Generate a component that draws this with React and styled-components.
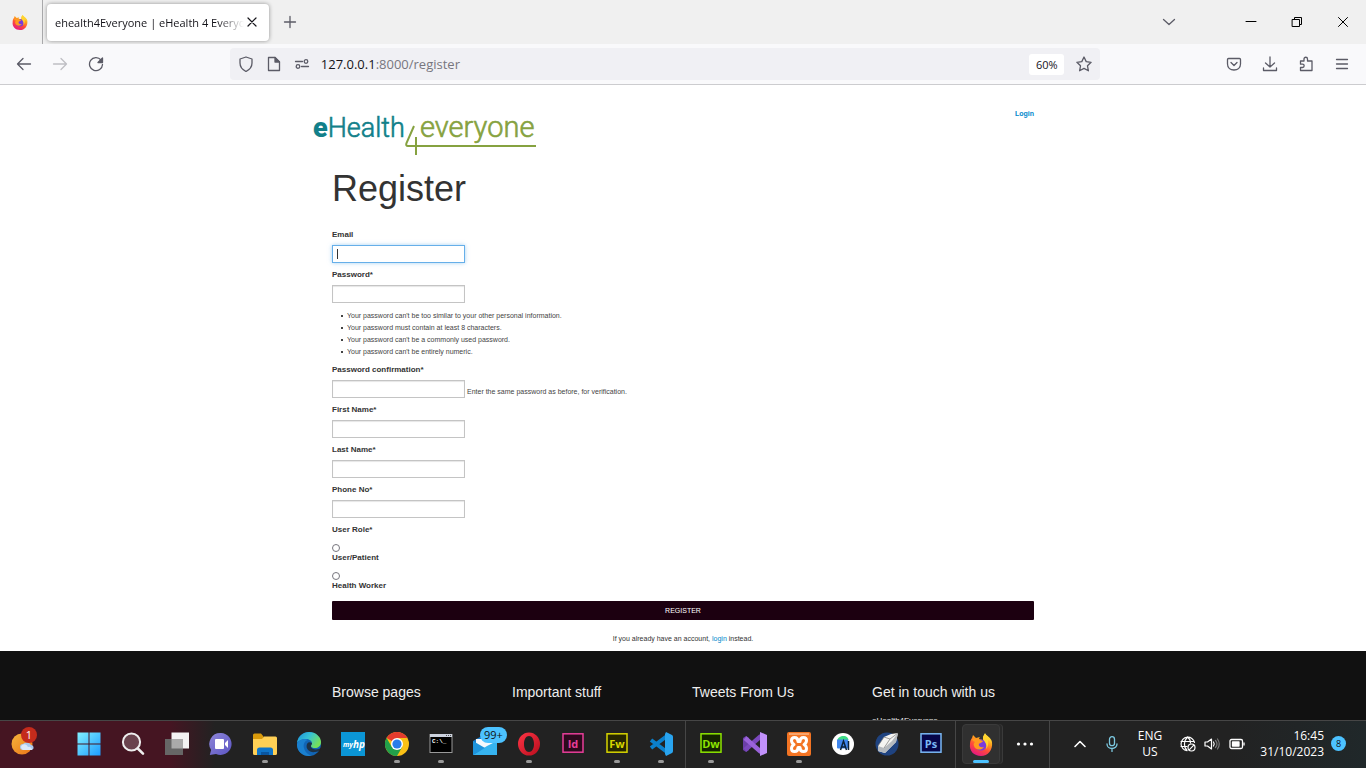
import React from 'react';
import styled, { createGlobalStyle } from 'styled-components';

const GlobalStyle = createGlobalStyle`
  *, *::before, *::after { box-sizing: border-box; }
  body { margin: 0; background: #fff; }
  button, input { font: inherit; }
  button { border: 0; padding: 0; background: none; color: inherit; }
  svg { display: block; flex: none; }
`;

const uiFont = `"Open Sans", "Noto Sans", sans-serif`;
const pageFont = `"Liberation Sans", Arial, sans-serif`;

const Desktop = styled.div`
  display: flex;
  flex-direction: column;
  height: 100vh;
  overflow: hidden;
  font-family: ${uiFont};
`;

/* Browser chrome */
const TabStrip = styled.div`
  display: flex;
  align-items: center;
  flex: none;
  height: 44px;
  background: #f0f0f0;
`;
const PinnedTab = styled.div`
  display: flex;
  align-items: center;
  justify-content: center;
  width: 43px;
  height: 44px;
  padding-right: 2px;
  border-right: 1px solid #a9a9ab;
`;
const Tab = styled.div`
  display: flex;
  align-items: center;
  width: 222px;
  height: 37px;
  margin-left: 4px;
  padding: 0 9px 0 8px;
  border-radius: 4px;
  background: #fff;
  box-shadow: 0 0 4px rgba(0, 0, 0, 0.4);
`;
const TabTitle = styled.span`
  flex: 1;
  overflow: hidden;
  white-space: nowrap;
  font-size: 11px;
  color: #15141a;
  mask-image: linear-gradient(to right, #000 86%, transparent);
`;
const IconButton = styled.button`
  display: flex;
  align-items: center;
  justify-content: center;
  width: ${(p) => p.$w || 36}px;
  height: 32px;
  color: ${(p) => p.$color || '#5b5b66'};
`;
const WindowControls = styled.div`
  display: flex;
  margin-left: auto;
`;
const Toolbar = styled.div`
  display: flex;
  align-items: center;
  flex: none;
  height: 41px;
  padding: 0 6px;
  border-bottom: 1px solid #cccccf;
  background: #f9f9fb;
`;
const Spacer = styled.div`
  flex: 2;
`;
const UrlBar = styled.div`
  display: flex;
  align-items: center;
  flex: 15;
  height: 32px;
  padding-left: 2px;
  border-radius: 4px;
  background: #f0f0f4;
`;
const Address = styled.span`
  flex: 1;
  padding-left: 5px;
  font-size: 13px;
  color: #77767e;
  b { font-weight: 400; color: #15141a; }
`;
const Zoom = styled.button`
  height: 21px;
  width: 35px;
  margin-right: 4px;
  border-radius: 3px;
  background: #fff;
  font-size: 11px;
  color: #15141a;
`;

/* Web page */
const Page = styled.div`
  flex: 1;
  min-height: 0;
  overflow: hidden;
  background: #fff;
  font-family: ${pageFont};
  font-size: 8px;
  line-height: 12px;
  color: #333;
`;
const Container = styled.div`
  max-width: 738px;
  margin: 0 auto;
  padding: 0 18px;
`;
const Header = styled.header`
  display: flex;
  justify-content: space-between;
  align-items: flex-start;
  max-width: 738px;
  margin: 0 auto;
  padding: 22px 18px 0 0;
`;
const LogoLink = styled.a`
  display: block;
  padding-top: 4px;
`;
const Link = styled.a`
  color: #0088cc;
  text-decoration: none;
`;
const LoginLink = styled(Link)`
  font-size: 7px;
  line-height: 14px;
  font-weight: 700;
`;
const Title = styled.h1`
  margin: 12px 0 20px;
  font-size: 36px;
  line-height: 40px;
  font-weight: 400;
`;
const Field = styled.div`
  margin-bottom: 6px;
`;
const Label = styled.label`
  display: block;
  font-weight: 700;
`;
const InputRow = styled.div`
  display: flex;
  align-items: flex-end;
  gap: 2px;
  margin-top: 4px;
`;
const Input = styled.input`
  width: 133px;
  height: 18px;
  padding: 2px 4px;
  border: 1px solid ${(p) => (p.$active ? '#66afe9' : '#c4c4c4')};
  border-radius: 0;
  outline: none;
  background: ${(p) =>
    p.$active ? 'linear-gradient(#333, #333) 4px center / 1px 10px no-repeat #fff' : '#fff'};
  box-shadow: ${(p) =>
    p.$active ? '0 0 4px rgba(102, 175, 233, 0.6)' : 'inset 0 1px 1px rgba(0, 0, 0, 0.1)'};
`;
const Hint = styled.span`
  font-size: 7px;
  color: #444;
`;
const Rules = styled.ul`
  margin: 7px 0 6px;
  padding-left: 9px;
  list-style: none;
  font-size: 7px;
  color: #444;
`;
const Rule = styled.li`
  display: flex;
  align-items: center;
  gap: 4px;
  &::before {
    content: '';
    width: 2px;
    height: 2px;
    background: #444;
  }
`;
const RoleSet = styled.fieldset`
  margin: 0;
  padding: 0;
  border: 0;
  legend { padding: 0; font-weight: 700; }
`;
const Role = styled.div`
  margin-top: 8px;
`;
const Radio = styled.input`
  display: block;
  appearance: none;
  width: 8px;
  height: 8px;
  margin: 0;
  border: 1px solid #77767e;
  border-radius: 50%;
  background: #fff;
`;
const Submit = styled.button`
  display: block;
  width: 100%;
  height: 19px;
  margin-top: 9px;
  border-radius: 1px;
  background: #1c0010;
  font-size: 7px;
  color: #fff;
`;
const Notice = styled.p`
  margin: 13px 0 6px;
  text-align: center;
  font-size: 7px;
`;
const Footer = styled.footer`
  min-height: 100%;
  padding-top: 32px;
  background: #111;
  color: #eee;
`;
const FooterColumns = styled.div`
  display: grid;
  grid-template-columns: repeat(4, 1fr);
  gap: 18px;
`;
const FooterTitle = styled.h2`
  margin: 0 0 14px;
  font-size: 14px;
  line-height: 18px;
  font-weight: 400;
  white-space: nowrap;
`;
const Text = styled.p`
  margin: 0;
`;

/* Taskbar */
const Taskbar = styled.div`
  display: flex;
  align-items: stretch;
  flex: none;
  height: 48px;
  padding-bottom: 2px;
  border-top: 1px solid #464646;
  background: linear-gradient(to right, #451522 170px, #222 215px, #222 90%, #20282a);
  color: #fff;
`;
const TaskButton = styled.button`
  position: relative;
  display: flex;
  align-items: center;
  justify-content: center;
  width: 44px;
`;
const WeatherButton = styled(TaskButton)`
  margin-right: 23px;
`;
const ActiveTile = styled.span`
  display: flex;
  align-items: center;
  justify-content: center;
  width: 38px;
  height: 40px;
  border: 1px solid #3a3a3a;
  border-radius: 4px;
  background: #303030;
  box-shadow: 2px 0 0 #292929, 3px 0 0 #3a3a3a;
`;
const Indicator = styled.i`
  position: absolute;
  bottom: 3px;
  left: 50%;
  width: ${(p) => (p.$active ? 16 : 6)}px;
  height: 3px;
  border-radius: 2px;
  background: ${(p) => (p.$active ? '#4cc2ff' : '#999')};
  transform: translateX(-50%);
`;
const Badge = styled.span`
  position: absolute;
  top: 6px;
  left: ${(p) => (p.$alert ? 21 : 17)}px;
  min-width: 16px;
  height: 16px;
  padding: 0 4px;
  border-radius: 8px;
  background: ${(p) => (p.$alert ? '#c42b1c' : '#4cc2ff')};
  color: ${(p) => (p.$alert ? '#fff' : '#111')};
  font-size: 11px;
  line-height: 16px;
`;
const Divider = styled.div`
  width: 1px;
  margin: 0 3px -2px 2px;
  background: #464646;
`;
const Tray = styled.div`
  display: flex;
  align-items: center;
  margin-left: auto;
  padding-right: 20px;
  font-size: 12px;
  line-height: 16px;
`;
const TrayButton = styled.button`
  display: flex;
  align-items: center;
  justify-content: center;
  width: ${(p) => p.$w}px;
  height: 40px;
`;
const StackedText = styled.div`
  width: ${(p) => p.$w}px;
  text-align: ${(p) => p.$align || 'center'};
`;
const Count = styled.span`
  width: 15px;
  height: 15px;
  margin-left: 7px;
  border-radius: 50%;
  background: #4cc2ff;
  color: #111;
  font-size: 9px;
  line-height: 15px;
  text-align: center;
`;

const Line = ({ size = 16, w = 1.3, children }) => (
  <svg width={size} height={size} viewBox="0 0 16 16" fill="none" stroke="currentColor" strokeWidth={w} strokeLinecap="round" strokeLinejoin="round" aria-hidden="true">
    {children}
  </svg>
);
const Art = ({ size = 24, children }) => (
  <svg width={size} height={size} viewBox="0 0 24 24" aria-hidden="true">{children}</svg>
);

const Firefox = ({ size, id }) => (
  <Art size={size}>
    <defs>
      <linearGradient id={id} x1="0.8" y1="0" x2="0.3" y2="1">
        <stop offset="0" stopColor="#fff44f" />
        <stop offset="0.35" stopColor="#ffa41c" />
        <stop offset="0.65" stopColor="#ff4a3a" />
        <stop offset="1" stopColor="#e31587" />
      </linearGradient>
    </defs>
    <path fill={`url(#${id})`} d="M3 6 4 3l3 3 4-1c-1 1-1 2-1 2l4 1V5l2-4c1 3 6 4 7 9 1 8-4 14-11 14C5 24 0 19 1 12c0-3 1-5 2-6Z" />
    <circle cx="12" cy="13" r="5.6" fill="#7a3bdc" />
    <path fill="#ff9a1f" d="M3 7c3-1 6 0 8 1l3 1c-1 2-4 2-4 3-1 2 2 4 5 3-3 4-9 3-10-1-1-2 0-3 1-4-2-1-3-2-3-3Z" />
    <path fill="#ffd32f" d="M16 2c2 3 6 4 6 9-1-2-2-3-3-3 1 5-1 8-2 9 2-6-3-8-3-11 0-2 1-3 2-4Z" />
  </Art>
);

const AdobeTile = ({ text, color, bg }) => (
  <Art>
    <rect x="2" y="1.8" width="20" height="18.4" fill={bg} stroke={color} strokeWidth="1.5" />
    <text x="12" y="15.5" textAnchor="middle" fontFamily="Open Sans" fontWeight="700" fontSize="11" fill={color}>{text}</text>
  </Art>
);

const WeatherIcon = () => (
  <Art>
    <defs><linearGradient id="sun" x2="1" y2="1"><stop stopColor="#f5b53c" /><stop offset="1" stopColor="#ea7418" /></linearGradient></defs>
    <circle cx="12" cy="12" r="10.5" fill="url(#sun)" />
    <path fill="#a9c9ee" d="M13 18a3 3 0 0 1 0-6 5 5 0 0 1 8 1 2.6 2.6 0 0 1 1 5Z" />
    <path fill="#dce9f9" d="M13 18a3 3 0 0 1-1-5 4 4 0 0 1 6 2 3 3 0 0 1 4 3Z" />
  </Art>
);
const StartIcon = () => (
  <Art>
    <defs><linearGradient id="win" x2="1" y2="1"><stop stopColor="#82f0ff" /><stop offset="1" stopColor="#1c9bff" /></linearGradient></defs>
    <path fill="url(#win)" d="M.5.5h11v11H.5zM12.5.5h11v11h-11zM.5 12.5h11v11H.5zM12.5 12.5h11v11h-11z" />
  </Art>
);
const SearchIcon = () => (
  <Art>
    <circle cx="10.5" cy="10" r="8.6" fill="#fff" fillOpacity=".2" stroke="#eee" strokeWidth="2" />
    <path d="m16.8 16.5 5.2 5.2" stroke="#eee" strokeWidth="2.6" strokeLinecap="round" />
  </Art>
);
const TaskViewIcon = () => (
  <Art>
    <path fill="#f3f3f3" d="M6.500.5h17.500v16H6.500z" />
    <path fill="#666" d="M0 7h18v16H0z" />
    <path fill="#aaa" d="M6.500 7H18v9.500H6.500z" />
  </Art>
);
const ChatIcon = () => (
  <Art>
    <defs><linearGradient id="chat" x2="1" y2="1"><stop stopColor="#8e86d8" /><stop offset="1" stopColor="#5b55c4" /></linearGradient></defs>
    <path fill="url(#chat)" d="M12 1a11 11 0 1 1-5 21L.8 23l1.300-5A11 11 0 0 1 12 1Z" />
    <rect x="6" y="7" width="9" height="10" rx="1" fill="#fff" />
    <path fill="#fff" d="m16 11 3-3v8l-3-3Z" />
  </Art>
);
const FolderIcon = () => (
  <Art>
    <path fill="#d99a0b" d="M0 3a1.500 1.500 0 0 1 1.500-1.500H8l2.500 3V9H0Z" />
    <path fill="#ffd055" d="M0 7h9l2-2.500h11.500A1.500 1.500 0 0 1 24 6v15.500a1.500 1.500 0 0 1-1.500 1.500h-21A1.500 1.500 0 0 1 0 21.500Z" />
    <path fill="#0f75c9" d="M4 23v-5a2.500 2.500 0 0 1 2.500-2.500h11A2.500 2.500 0 0 1 20 18v5Z" />
    <path fill="#0a56a0" d="M8 20h8v3H8z" />
  </Art>
);
const EdgeIcon = () => (
  <Art>
    <defs>
      <linearGradient id="edge" x2="1" y2=".5"><stop stopColor="#1b8fd8" /><stop offset=".5" stopColor="#35c1d5" /><stop offset="1" stopColor="#74e05b" /></linearGradient>
    </defs>
    <circle cx="12" cy="12" r="12" fill="#1265b5" />
    <path fill="url(#edge)" d="M0 11C1 4 6 0 12 0c7 0 12 5 12 10 0 4-3 6-6 6-2 0-4-.5-4-2s1-1 1-3c0-2-3-4-6-4-4 0-8 2-9 4Z" />
    <path fill="#1a80cf" d="M0 12c2-5 8-6 11-4-4 1-5 5-4 8 1 4 4 7 8 7.500C7 25.500-.5 20 0 12Z" />
    <path fill="#222" d="M10 12c-2 5 3 9 8 8 2 0 4-1 5-2l.5.500L24 16c-3 2-9 2-10-1-.5-2 1-2 1-4-2-1-4-1-5 1Z" opacity=".75" />
  </Art>
);
const MyHpIcon = () => (
  <Art>
    <rect width="24" height="24" fill="#0b96d6" />
    <text x="2" y="14.500" fontFamily="Open Sans" fontStyle="italic" fontWeight="700" fontSize="7" fill="#fff">my</text>
    <text x="12" y="15.500" fontFamily="Open Sans" fontStyle="italic" fontWeight="700" fontSize="10" fill="#fff">hp</text>
  </Art>
);
const ChromeIcon = () => (
  <Art>
    <circle cx="12" cy="12" r="12" fill="#fbc116" />
    <path fill="#e33b2e" d="M12 12 1.600 6A12 12 0 0 1 22.400 6H12Z" />
    <path fill="#22a04a" d="M1.600 6A12 12 0 0 0 12 24l5.200-9L12 12 6.800 15Z" />
    <circle cx="12" cy="12" r="6" fill="#fff" />
    <circle cx="12" cy="12" r="4.600" fill="#2a7de9" />
  </Art>
);
const TerminalIcon = () => (
  <Art>
    <rect x="1" y="2.500" width="22" height="18" fill="#000" stroke="#999" />
    <path fill="#ccd2de" d="M1 2h22v3H1z" />
    <path fill="#555" d="M17 3h1v1h-1zM19 3h1v1h-1zM21 3h1v1h-1z" />
    <text x="3" y="11" fontFamily="Liberation Mono" fontWeight="700" fontSize="6" fill="#fff">C:\_</text>
  </Art>
);
const MailIcon = () => (
  <Art>
    <path fill="#1478c8" d="m0 9 12-7 12 7v14H0Z" />
    <path fill="#f5f8fc" d="M3 7h18v7l-9 6-9-6Z" />
    <path fill="#36b4f0" d="M24 9v14H0l14-9Z" />
    <path fill="#1e94dc" d="M0 9v14l12-7Z" />
  </Art>
);
const OperaIcon = () => (
  <Art>
    <defs><linearGradient id="opera" x2="1" y2="1"><stop stopColor="#ff3545" /><stop offset="1" stopColor="#b80d1d" /></linearGradient></defs>
    <path fillRule="evenodd" fill="url(#opera)" d="M12 .5a11 11.500 0 1 0 0 23 11 11.500 0 1 0 0-23Zm0 3.500c3 0 5 3.500 5 8s-2 8-5 8-5-3.500-5-8 2-8 5-8Z" />
  </Art>
);
const VsCodeIcon = () => (
  <Art>
    <path fill="none" stroke="#0b80cc" strokeWidth="4" strokeLinejoin="round" d="m2 8 16 12M2 16 18 4" />
    <path fill="#29a4ef" d="m17 0 6 3q1 .5 1 2v14q0 1.500-1 2l-6 3-1-2V2Z" />
  </Art>
);
const VisualStudioIcon = () => (
  <Art>
    <path fill="#6b3fa8" d="M0 6l3-2 3 2v12l-3 2-3-2Z" />
    <path fill="none" stroke="#7b48bd" strokeWidth="4.500" d="M2 18 18 4" />
    <path fill="none" stroke="#9a63da" strokeWidth="4.500" d="m2 6 16 14" />
    <path fill="#c191fb" d="m17 0 7 3v18l-7 3Z" />
  </Art>
);
const XamppIcon = () => (
  <Art>
    <rect width="24" height="24" rx="2" fill="#f37423" />
    <path fill="#f9a56c" d="M2 1h20v2H2z" />
    <path fill="none" stroke="#fff" strokeWidth="3" strokeLinejoin="round" d="M4.500 8.500q0-3 3-3 3.500 0 3.500 4h2q0-4 3.500-4 3 0 3 3 0 2.500-2.500 4 2.500 1.500 2.500 4 0 3-3 3-3.500 0-3.500-4h-2q0 4-3.500 4-3 0-3-3 0-2.500 2.500-4-2.500-1.500-2.500-4Z" />
  </Art>
);
const AndroidStudioIcon = () => (
  <Art>
    <circle cx="12" cy="12" r="11" fill="#fff" />
    <path fill="#3ddc84" d="M6.500 8.500c0-3 3-4.500 6-4.500s5 2 5 4.500Z" />
    <path fill="#3f86ee" d="M6 7.500h11v9H7q-1 0-1-1Z" />
    <path fill="none" stroke="#0b2238" strokeWidth="1.500" d="m9.500 18 3-9 3 9m-5-3h4m3-6v9" />
  </Art>
);
const CubeIcon = () => (
  <Art>
    <circle cx="12" cy="12" r="11.500" fill="#1f4380" />
    <path fill="#f4f4f2" d="m9 5 7-3 7-1-2 9-8 8-3 3-7-2V14Z" />
    <path fill="#b4b9be" d="m3 14 6 2 1 5-7-2Zm7 7-1-5 8-7 6-8-2 9-8 8Z" />
    <path fill="none" stroke="#777" strokeWidth=".7" d="m9 5 6 2-6 9M15 7l8-6M3 14l6-9" />
  </Art>
);
const DotsIcon = () => (
  <Art>
    <circle cx="5.500" cy="12" r="1.600" fill="#fff" />
    <circle cx="12" cy="12" r="1.600" fill="#fff" />
    <circle cx="18.500" cy="12" r="1.600" fill="#fff" />
  </Art>
);

const Logo = () => (
  <svg width="226" height="46" viewBox="0 0 226 46" overflow="visible" role="img" aria-label="eHealth4everyone">
    <g fontFamily="Roboto, sans-serif" fontWeight="300" strokeWidth=".6">
      <text x="-1" y="26" fontSize="27" fill="#12808a" stroke="#12808a"><tspan fontWeight="900" stroke="none">e</tspan>Health</text>
      <text x="106" y="26" fontSize="29" fill="#86a240" stroke="#86a240">everyone</text>
    </g>
    <path d="M100 15 92.500 32Q91.500 35 94 35H222M102 26V44" fill="none" stroke="#86a240" strokeWidth="2" />
  </svg>
);

const pinnedApps = [
  ['Start', <StartIcon />],
  ['Search', <SearchIcon />],
  ['Task view', <TaskViewIcon />],
  ['Chat', <ChatIcon />],
  ['File Explorer', <FolderIcon />, true],
  ['Edge', <EdgeIcon />],
  ['myHP', <MyHpIcon />],
  ['Chrome', <ChromeIcon />, true],
  ['Command Prompt', <TerminalIcon />, true],
  ['Mail', <MailIcon />, false, '99+'],
  ['Opera', <OperaIcon />, true],
  ['InDesign', <AdobeTile text="Id" color="#e83e99" bg="#2c0a1d" />],
  ['Fireworks', <AdobeTile text="Fw" color="#d8d500" bg="#262600" />, true],
  ['Visual Studio Code', <VsCodeIcon />, true],
];
const moreApps = [
  ['Dreamweaver', <AdobeTile text="Dw" color="#8de500" bg="#142400" />, true],
  ['Visual Studio', <VisualStudioIcon />],
  ['XAMPP', <XamppIcon />, true],
  ['Android Studio', <AndroidStudioIcon />],
  ['VirtualBox', <CubeIcon />],
  ['Photoshop', <AdobeTile text="Ps" color="#7ab8f5" bg="#06064a" />],
];
const renderApp = ([name, icon, running, badge]) => (
  <TaskButton key={name} aria-label={name}>
    {icon}
    {running && <Indicator />}
    {badge && <Badge>{badge}</Badge>}
  </TaskButton>
);

const TextField = ({ id, label, type = 'text', active, hint }) => (
  <Field>
    <Label htmlFor={id}>{label}</Label>
    <InputRow>
      <Input id={id} type={type} $active={active} />
      {hint && <Hint>{hint}</Hint>}
    </InputRow>
  </Field>
);

const passwordRules = [
  "Your password can't be too similar to your other personal information.",
  'Your password must contain at least 8 characters.',
  "Your password can't be a commonly used password.",
  "Your password can't be entirely numeric.",
];

export default function App() {
  return (
    <Desktop>
      <GlobalStyle />
      <TabStrip>
        <PinnedTab><Firefox size={16} id="fx-tab" /></PinnedTab>
        <Tab>
          <TabTitle>ehealth4Everyone | eHealth 4 Everyone</TabTitle>
          <IconButton $w={16} $color="#15141a" aria-label="Close tab"><Line w={1.2}><path d="m4 4 8 8M12 4l-8 8" /></Line></IconButton>
        </Tab>
        <IconButton $w={42} aria-label="New tab"><Line><path d="M8 2.500v11M2.500 8h11" /></Line></IconButton>
        <WindowControls>
          <IconButton $w={46} aria-label="List all tabs"><Line><path d="m2.500 5.500 5.500 5 5.500-5" /></Line></IconButton>
          <IconButton $w={36} as="span" />
          <IconButton $w={46} $color="#000" aria-label="Minimize"><Line w={1}><path d="M3 7.500h10" /></Line></IconButton>
          <IconButton $w={46} $color="#000" aria-label="Restore"><Line w={1}><path d="M3.500 5.500h7v7h-7zM5.500 5.500v-2h7v7h-2" /></Line></IconButton>
          <IconButton $w={46} $color="#000" aria-label="Close"><Line w={1}><path d="m3.500 3.500 9 9M12.500 3.500l-9 9" /></Line></IconButton>
        </WindowControls>
      </TabStrip>
      <Toolbar>
        <IconButton aria-label="Back"><Line><path d="M14.500 8h-13M7 2.500 1.500 8 7 13.500" /></Line></IconButton>
        <IconButton $color="#bfbfc4" aria-label="Forward"><Line><path d="M1.500 8h13M9 2.500 14.500 8 9 13.500" /></Line></IconButton>
        <IconButton aria-label="Reload"><Line><path d="M13 4A6.500 6.500 0 1 0 14.500 8.500" /><path fill="currentColor" d="M14.500 2v4.500H10Z" /></Line></IconButton>
        <Spacer />
        <UrlBar>
          <IconButton $w={28} aria-label="Tracking protection"><Line><path d="M8 1 2 3v4c0 4 3 7 6 8.500C11 14 14 11 14 7V3Z" /></Line></IconButton>
          <IconButton $w={28} aria-label="Site information"><Line><path d="M2.500 1.500H9L13.500 6v8.500h-11Z" /><path fill="currentColor" d="M9 1.500V6h4.500Z" /></Line></IconButton>
          <IconButton $w={28} aria-label="Permissions"><Line><path d="M1.500 5.500h7M7.500 10.500h7" /><circle cx="12" cy="5.500" r="1.800" /><circle cx="4" cy="10.500" r="1.800" /></Line></IconButton>
          <Address><b>127.0.0.1</b>:8000/register</Address>
          <Zoom>60%</Zoom>
          <IconButton $w={32} aria-label="Bookmark"><Line><path d="m8 1 2.200 4.600 4.900.7-3.600 3.500.9 5L8 12.400l-4.400 2.400.9-5L.9 6.300l4.900-.7Z" /></Line></IconButton>
        </UrlBar>
        <Spacer />
        <IconButton aria-label="Save to Pocket"><Line><path d="M1.500 3.500q0-1 1-1h11q1 0 1 1V8c0 4-3 6-6.500 6S1.500 12 1.500 8Z" /><path d="m5 6.500 3 3 3-3" /></Line></IconButton>
        <IconButton aria-label="Downloads"><Line><path d="M8 1v10M3.500 7 8 11l4.500-4M1.500 12v2.500h13V12" /></Line></IconButton>
        <IconButton aria-label="Extensions"><Line><path d="M2.500 5H6V3a1.700 1.700 0 0 1 3.500 0v2H14v9.500H2.500v-3h2a1.600 1.600 0 0 0 0-3.300h-2Z" /></Line></IconButton>
        <IconButton aria-label="Menu"><Line><path d="M2.500 3.500h11M2.500 8h11M2.500 12.500h11" /></Line></IconButton>
      </Toolbar>

      <Page>
        <Header>
          <LogoLink href="#home"><Logo /></LogoLink>
          <LoginLink href="#login">Login</LoginLink>
        </Header>
        <Container as="main">
          <Title>Register</Title>
          <form>
            <TextField id="email" label="Email" active />
            <TextField id="password" label="Password*" type="password" />
            <Rules>{passwordRules.map((r) => <Rule key={r}>{r}</Rule>)}</Rules>
            <TextField id="confirm" label="Password confirmation*" type="password" hint="Enter the same password as before, for verification." />
            <TextField id="first" label="First Name*" />
            <TextField id="last" label="Last Name*" />
            <TextField id="phone" label="Phone No*" />
            <RoleSet>
              <legend>User Role*</legend>
              <Role><Radio type="radio" name="role" id="patient" /><Label htmlFor="patient">User/Patient</Label></Role>
              <Role><Radio type="radio" name="role" id="worker" /><Label htmlFor="worker">Health Worker</Label></Role>
            </RoleSet>
            <Submit type="button">REGISTER</Submit>
          </form>
          <Notice>If you already have an account, <Link href="#login">login</Link> instead.</Notice>
        </Container>
        <Footer>
          <Container>
            <FooterColumns>
              <FooterTitle>Browse pages</FooterTitle>
              <FooterTitle>Important stuff</FooterTitle>
              <FooterTitle>Tweets From Us</FooterTitle>
              <div>
                <FooterTitle>Get in touch with us</FooterTitle>
                <Text>eHealth4Everyone</Text>
              </div>
            </FooterColumns>
          </Container>
        </Footer>
      </Page>

      <Taskbar>
        <WeatherButton aria-label="Weather"><WeatherIcon /><Badge $alert>1</Badge></WeatherButton>
        {pinnedApps.map(renderApp)}
        <Divider />
        {moreApps.map(renderApp)}
        <Divider />
        <TaskButton aria-label="Firefox"><ActiveTile><Firefox size={24} id="fx-task" /></ActiveTile><Indicator $active /></TaskButton>
        <TaskButton aria-label="More apps"><DotsIcon /></TaskButton>
        <Divider />
        <Tray>
          <TrayButton $w={32} aria-label="Hidden icons"><Line w={1.6}><path d="m3 10.500 5-5 5 5" /></Line></TrayButton>
          <TrayButton $w={32} aria-label="Microphone">
            <svg width="16" height="16" viewBox="0 0 16 16" fill="none" stroke="#7cc8e0" strokeWidth="1.300" strokeLinecap="round"><rect x="5.500" y=".7" width="5" height="9" rx="2.500" /><path d="M3 8a5 4.500 0 0 0 10 0M8 12.500v3" /></svg>
          </TrayButton>
          <StackedText $w={44}>ENG<br />US</StackedText>
          <TrayButton $w={32} aria-label="Network">
            <Line w={1.2}><path d="M14.500 6.500A6.800 6.800 0 1 0 7 14.700M1 5.500h13M1 10.500h6M7.500 1C3.500 5 3.500 11 7 14.500M7.500 1c2 1.500 3 4 3 6" /><circle cx="11.500" cy="11.500" r="3.500" /><path d="m9.200 13.800 4.600-4.600" /></Line>
          </TrayButton>
          <TrayButton $w={16} aria-label="Volume">
            <Line w={1.2}><path d="M1 6v4h2.500L7.500 13V3L3.500 6Z" /><path d="M9.500 6q1.500 2 0 4" /><path stroke="#777" d="M11.500 4.500q3 3.500 0 7M13.500 3q3.500 5 0 10" /></Line>
          </TrayButton>
          <TrayButton $w={34} aria-label="Battery">
            <Line w={1.3}><rect x="1" y="3.500" width="12.500" height="9" rx="1.500" /><path fill="currentColor" d="M3.500 6h6.500v4H3.500zM15 7v2" /></Line>
          </TrayButton>
          <StackedText $w={70} $align="right">16:45<br />31/10/2023</StackedText>
          <Count>8</Count>
        </Tray>
      </Taskbar>
    </Desktop>
  );
}
